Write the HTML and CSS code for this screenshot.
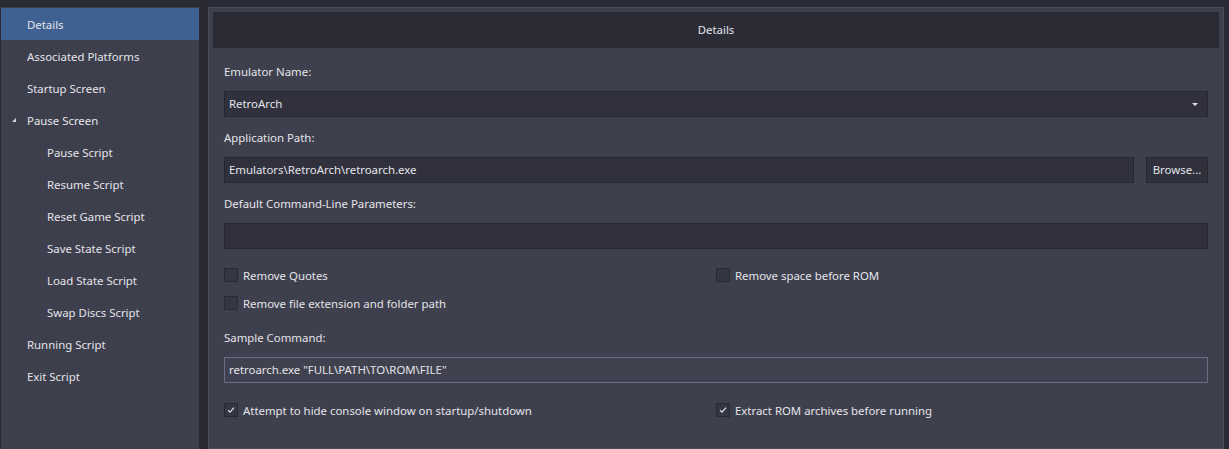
FILE: index.html
```html
<!DOCTYPE html>
<html lang="en">
<head>
  <meta charset="UTF-8">
  <title>Emulator Details</title>
  <link rel="stylesheet" href="styles.css">
</head>
<body>
  <div class="app">
    <div class="sidebar">
      <div class="nav-item active">Details</div>
      <div class="nav-item">Associated Platforms</div>
      <div class="nav-item">Startup Screen</div>
      <div class="nav-item expander"><span class="tri"></span>Pause Screen</div>
      <div class="nav-item sub">Pause Script</div>
      <div class="nav-item sub">Resume Script</div>
      <div class="nav-item sub">Reset Game Script</div>
      <div class="nav-item sub">Save State Script</div>
      <div class="nav-item sub">Load State Script</div>
      <div class="nav-item sub">Swap Discs Script</div>
      <div class="nav-item">Running Script</div>
      <div class="nav-item">Exit Script</div>
    </div>

    <div class="panel">
      <div class="panel-header">Details</div>
      <div class="form">
        <div class="label">Emulator Name:</div>
        <div class="field select">
          <span>RetroArch</span>
          <span class="arrow"></span>
        </div>

        <div class="label">Application Path:</div>
        <div class="path-row">
          <div class="field grow">Emulators\RetroArch\retroarch.exe</div>
          <div class="btn">Browse...</div>
        </div>

        <div class="label">Default Command-Line Parameters:</div>
        <div class="field"></div>

        <div class="checks">
          <div class="check"><span class="box"></span>Remove Quotes</div>
          <div class="check"><span class="box"></span>Remove space before ROM</div>
          <div class="check"><span class="box"></span>Remove file extension and folder path</div>
        </div>

        <div class="label">Sample Command:</div>
        <div class="field sample">retroarch.exe "FULL\PATH\TO\ROM\FILE"</div>

        <div class="checks last">
          <div class="check"><span class="box"><svg width="10" height="10" viewBox="0 0 10 10"><polyline points="2,5.2 4,7.2 8,2.6" fill="none" stroke="#e6e6ec" stroke-width="1.2"/></svg></span>Attempt to hide console window on startup/shutdown</div>
          <div class="check"><span class="box"><svg width="10" height="10" viewBox="0 0 10 10"><polyline points="2,5.2 4,7.2 8,2.6" fill="none" stroke="#e6e6ec" stroke-width="1.2"/></svg></span>Extract ROM archives before running</div>
        </div>
      </div>
    </div>
  </div>
</body>
</html>
```

FILE: styles.css
```css
body {
  margin: 0;
  background: #2a2a34;
  font-family: "Noto Sans", "Open Sans", sans-serif;
  font-size: 11.4px;
  color: #e4e4ea;
}
.app {
  display: flex;
  height: 449px;
  padding-top: 7px;
  box-sizing: border-box;
}
.sidebar {
  width: 198px;
  margin-left: 1px;
  padding-top: 1px;
  background: #3e3f4c;
}
.nav-item {
  height: 32px;
  box-sizing: border-box;
  padding-top: 2px;
  line-height: 30px;
  padding-left: 26px;
  position: relative;
  white-space: nowrap;
}
.nav-item.sub {
  padding-left: 46px;
}
.nav-item.active {
  background: #3f6192;
}
.tri {
  position: absolute;
  left: 11px;
  top: 14px;
  width: 0;
  height: 0;
  border-left: 4px solid transparent;
  border-bottom: 4px solid #d8d8e0;
}
.panel {
  flex: 1;
  margin-left: 9px;
  margin-right: 5px;
  background: #3f404d;
  border: 1px solid #4b4c5b;
  padding: 4px;
}
.panel-header {
  height: 36px;
  line-height: 36px;
  background: #2c2c37;
  text-align: center;
}
.form {
  padding: 0 11px;
}
.label {
  height: 20px;
  line-height: 20px;
  margin-top: 14px;
  margin-bottom: 9px;
}
.form .label ~ .label {
  margin-top: 11px;
}
.field {
  height: 26px;
  line-height: 24px;
  box-sizing: border-box;
  background: #30313d;
  border: 1px solid #26262f;
  padding: 0 4px;
  white-space: nowrap;
}
.select {
  display: flex;
  justify-content: space-between;
  align-items: center;
}
.arrow {
  width: 0;
  height: 0;
  margin-right: 5px;
  border-left: 3px solid transparent;
  border-right: 3px solid transparent;
  border-top: 3px solid #e0e0e8;
}
.path-row {
  display: flex;
  gap: 12px;
}
.grow {
  flex: 1;
}
.btn {
  width: 62px;
  height: 26px;
  line-height: 24px;
  box-sizing: border-box;
  text-align: center;
  background: #30313d;
  border: 1px solid #26262f;
}
.sample {
  background: #41424f;
  border-color: #6b6c86;
}
.checks {
  display: grid;
  grid-template-columns: 1fr 1fr;
  margin-top: 12px;
}
.checks.last {
  margin-top: 13px;
}
.check {
  height: 28px;
  display: flex;
  align-items: center;
  gap: 5px;
  white-space: nowrap;
}
.box {
  width: 14px;
  height: 14px;
  box-sizing: border-box;
  background: #353643;
  border: 1px solid #2a2a33;
  display: flex;
  align-items: center;
  justify-content: center;
}
```
